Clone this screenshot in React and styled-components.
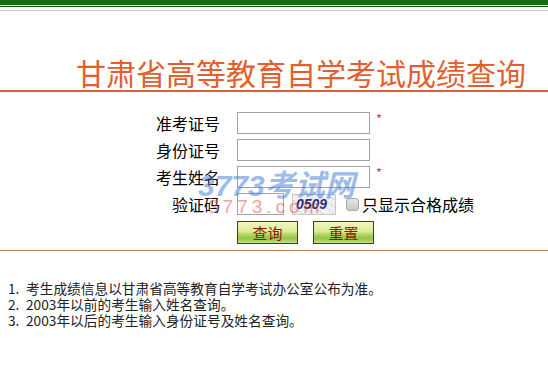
import React from 'react'
import styled, { createGlobalStyle } from 'styled-components'

const Global = createGlobalStyle`
    body {
        margin: 0;
        background: #fff;
        font-family: "Noto Sans CJK SC", "Liberation Sans", sans-serif;
    }
`

const Page = styled.div`
    width: 548px;
    height: 380px;
    overflow: hidden;
`

const TopBar = styled.div`
    height: 5px;
    background: #0e6f14;
    border-bottom: 1px solid #fff;
`

const TopLine = styled.div`
    height: 1px;
    background: #0b5a10;
    margin-bottom: 3px;
`

const GrayLine = styled.div`
    height: 1px;
    background: #c9c6bd;
`

const Title = styled.h1`
    margin: 0;
    padding: 46px 22px 3px 0;
    text-align: right;
    font-size: 30px;
    line-height: 30px;
    font-weight: normal;
    color: #e2602f;
`

const Rule = styled.div`
    height: ${p => p.thick ? '2px' : '1px'};
    background: ${p => p.color};
`

const Form = styled.div`
    position: relative;
    display: grid;
    grid-template-columns: 80px auto;
    column-gap: 17px;
    row-gap: 5px;
    padding: 20px 0 6px 140px;
`

const Label = styled.div`
    text-align: right;
    font-size: 16px;
    line-height: 22px;
    color: #000;
`

const Field = styled.div`
    display: flex;
    align-items: center;
    height: 22px;
`

const Input = styled.input`
    box-sizing: border-box;
    width: ${p => p.w}px;
    height: 22px;
    border: 1px solid #a3a3a3;
    margin: 0;
    padding: 0 2px;
    background: #fff;
`

const Star = styled.span`
    color: #e0305a;
    font-size: 13px;
    margin-left: 6px;
    align-self: flex-start;
    line-height: 14px;
`

const Captcha = styled.div`
    box-sizing: border-box;
    width: 44px;
    height: 21px;
    margin-left: 8px;
    border: 1px solid #c8c8c8;
    background:
        repeating-linear-gradient(35deg, transparent 0 5px, rgba(150,150,150,0.25) 5px 6px),
        #f1f1f4;
    font-family: "Liberation Sans", sans-serif;
    font-weight: bold;
    font-style: italic;
    font-size: 14px;
    line-height: 19px;
    color: #2b2d6e;
    padding-left: 3px;
`

const Check = styled.span`
    box-sizing: border-box;
    width: 13px;
    height: 13px;
    margin: 0 3px 0 10px;
    border: 1px solid #a8a8a8;
    border-radius: 3px;
    background: linear-gradient(#e6e6e6, #c8c8c8);
`

const CheckText = styled.span`
    font-size: 16px;
    color: #000;
`

const Buttons = styled.div`
    grid-column: 2;
    display: flex;
    gap: 15px;
    margin-top: 1px;
`

const Button = styled.button`
    box-sizing: border-box;
    width: 61px;
    height: 23px;
    border: 1px solid #6e2a12;
    padding: 0;
    background: linear-gradient(#f1f6bd 0%, #dcea9a 45%, #a9d35c 62%, #94c548 80%, #c8e387 100%);
    color: #8c1c05;
    font-family: "Noto Sans CJK SC", sans-serif;
    font-size: 15px;
    line-height: 20px;
`

const Watermark = styled.div`
    position: absolute;
    z-index: 2;
    left: ${p => p.x}px;
    top: ${p => p.y}px;
    font-family: "Liberation Sans", "Noto Sans CJK SC", sans-serif;
    font-weight: ${p => p.bold ? 'bold' : 'normal'};
    font-style: ${p => p.bold ? 'italic' : 'normal'};
    font-size: ${p => p.size}px;
    line-height: ${p => p.size}px;
    letter-spacing: ${p => p.spacing || 0}px;
    color: ${p => p.color};
    opacity: ${p => p.alpha};
    white-space: nowrap;
    pointer-events: none;
`

const Notes = styled.ol`
    list-style: none;
    margin: 29px 0 0;
    padding: 0 0 0 8px;
    font-size: 13.7px;
    line-height: 16px;
    color: #222;
`

const Note = styled.li`
    display: flex;
`

const Num = styled.span`
    width: 18px;
    flex: none;
`

const notes = [
    '考生成绩信息以甘肃省高等教育自学考试办公室公布为准。',
    '2003年以前的考生输入姓名查询。',
    '2003年以后的考生输入身份证号及姓名查询。',
]

const App = () => {
    return (
        <Page>
            <Global />
            <TopBar />
            <TopLine />
            <GrayLine />
            <Title>甘肃省高等教育自学考试成绩查询</Title>
            <Rule thick color="#d3643d" />
            <Form>
                <Label>准考证号</Label>
                <Field><Input w={133} /><Star>*</Star></Field>
                <Label>身份证号</Label>
                <Field><Input w={133} /></Field>
                <Label>考生姓名</Label>
                <Field><Input w={133} /><Star>*</Star></Field>
                <Label>验证码</Label>
                <Field>
                    <Input w={47} />
                    <Captcha>0509</Captcha>
                    <Check />
                    <CheckText>只显示合格成绩</CheckText>
                </Field>
                <Buttons>
                    <Button>查询</Button>
                    <Button>重置</Button>
                </Buttons>
                <Watermark bold x={198} y={79} size={30} color="#4f86da" alpha={0.55}>3773考试网</Watermark>
                <Watermark x={208} y={105} size={19} spacing={4} color="#e2483e" alpha={0.5}>3773.com</Watermark>
            </Form>
            <Rule color="#c0805e" />
            <Notes>
                {notes.map((n, i) => (
                    <Note key={i}><Num>{i + 1}.</Num>{n}</Note>
                ))}
            </Notes>
        </Page>
    )
}

export default App
